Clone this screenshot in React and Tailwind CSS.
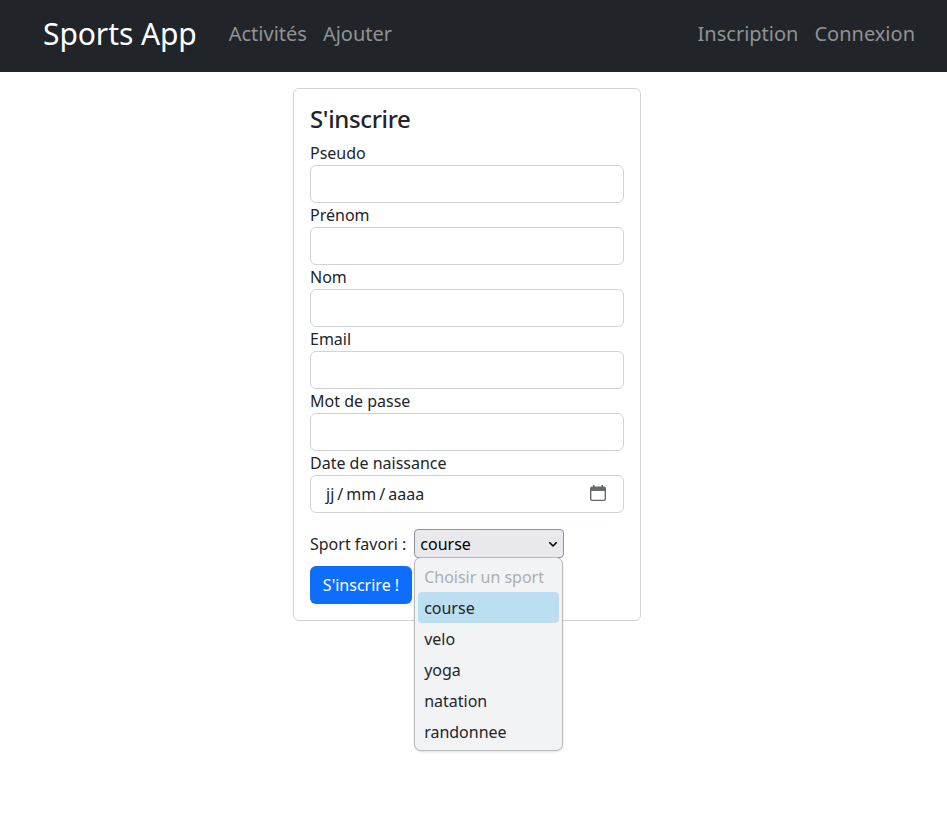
const fields = ["Pseudo", "Prénom", "Nom", "Email", "Mot de passe"];
const sports = ["course", "velo", "yoga", "natation", "randonnee"];

function Field({ label }) {
  return (
    <label className="block">
      <span className="block h-6 leading-6">{label}</span>
      <input className="block h-[38px] w-full rounded-md border border-[#ced4da] bg-white px-3 outline-none" />
    </label>
  );
}

function CalendarIcon() {
  return (
    <svg className="mb-0.5" width="16" height="16" viewBox="0 0 16 16" fill="#676a6d">
      <path
        fillRule="evenodd"
        d="M3 0h1.6v1.4h6.8V0H13v1.4h1a2 2 0 0 1 2 2V14a2 2 0 0 1-2 2H2a2 2 0 0 1-2-2V3.4a2 2 0 0 1 2-2h1zM1.4 6v8a.7.7 0 0 0 .7.7h11.8a.7.7 0 0 0 .7-.7V6z"
      />
    </svg>
  );
}

export default function App() {
  return (
    <div className="min-h-[819px] bg-white font-['Noto_Sans',sans-serif] text-base text-[#212529]">
      <nav className="flex h-18 items-center bg-[#212529] pr-8 pb-1 pl-[43px] text-xl text-[#909294]">
        <a className="mr-8 pb-0.5 text-[30px] leading-[45px] tracking-[-0.08px] text-white">Sports App</a>
        <div className="flex flex-1 gap-4">
          <a>Activités</a>
          <a>Ajouter</a>
        </div>
        <div className="flex gap-4">
          <a>Inscription</a>
          <a>Connexion</a>
        </div>
      </nav>
      <main className="mt-4 ml-[293px] h-[533px] w-[348px] rounded-md border border-[#d3d3d4] p-4">
        <h1 className="mb-2 h-7 text-2xl leading-[27px] font-medium tracking-[-0.35px]">S'inscrire</h1>
        {fields.map((f) => (
          <Field key={f} label={f} />
        ))}
        <div className="h-6 leading-6">Date de naissance</div>
        <div className="flex h-[38px] items-center justify-between rounded-md border border-[#ced4da] pr-[17px] pl-[15px]">
          <span className="[word-spacing:-1.1px]">jj / mm / aaaa</span>
          <CalendarIcon />
        </div>
        <div className="mt-4 flex h-[29px] items-center">
          <span>Sport favori :</span>
          <div className="relative ml-2 flex h-[29px] w-[150px] items-center justify-between rounded-[4px] border border-[#8f8f9d] bg-[#e9e9ed] pr-[6px] pl-[5px] text-black">
            course
            <svg className="mt-px" width="8" height="5" viewBox="0 0 8 5" fill="none" stroke="black" strokeWidth="1.6" strokeLinecap="round" strokeLinejoin="round">
              <path d="M.8.8L4 4 7.2.8" />
            </svg>
            <ul className="absolute top-[27px] -left-px w-[149px] rounded-[7px] border border-[#b7b9ba] bg-[#f1f3f5] px-[3px] py-[3px] text-[#232629] shadow-sm">
              <li className="h-[31px] px-[5.8px] leading-[33px] text-[#acaeb0]">Choisir un sport</li>
              {sports.map((s, i) => (
                <li key={s} className={i === 0 ? "h-[31px] rounded-[4px] bg-[#bbdef0] px-[5.8px] leading-[33px]" : "h-[31px] px-[5.8px] leading-[33px]"}>
                  {s}
                </li>
              ))}
            </ul>
          </div>
        </div>
        <button className="mt-2 h-[38px] w-[102px] rounded-md bg-[#0d6efd] text-white">S'inscrire !</button>
      </main>
    </div>
  );
}
